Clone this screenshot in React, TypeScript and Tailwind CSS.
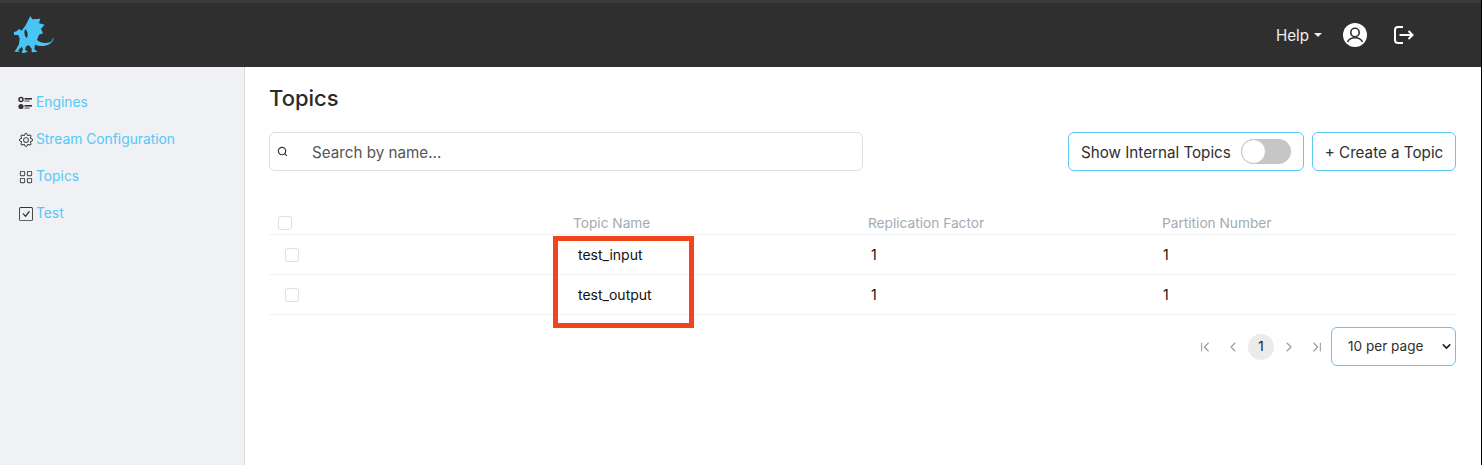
import { ChevronDown, ChevronFirst, ChevronLast, ChevronLeft, ChevronRight, Search } from 'lucide-react'
import { BsCheckSquare, BsGear, BsGrid } from 'react-icons/bs'
import type { ReactNode } from 'react'

function EnginesIcon() {
  return (
    <svg width="15" height="14" viewBox="0 0 15 14" className="text-[#333]">
      <circle cx="3" cy="3.5" r="2" fill="none" stroke="currentColor" strokeWidth="1.5" />
      <circle cx="3" cy="10.5" r="2.6" fill="currentColor" />
      <rect x="6.5" y="2" width="7.5" height="1.6" fill="currentColor" />
      <rect x="6.5" y="4.4" width="5" height="1.4" fill="#777" />
      <rect x="6.5" y="9" width="7.5" height="1.6" fill="currentColor" />
      <rect x="6.5" y="11.4" width="5" height="1.4" fill="#777" />
    </svg>
  )
}

function Logo() {
  return (
    <svg width="42" height="40" viewBox="40 45 126 120" className="text-[#48c5f5]">
      <path
        fill="currentColor"
        fillRule="evenodd"
        d="M92 48 L98 58 L122 56 L118 70 L135 74 L124 86 L130 100 L118 104 L112 120 C122 130 144 132 156 124 L161 112 C163 126 150 136 132 138 C122 139 114 137 106 134 L104 148 L114 155 L96 157 L96 146 L88 136 L80 138 L76 148 L84 156 L68 160 L66 154 L70 151 L67 140 L60 146 L55 152 L62 155 L44 155 L50 147 L58 132 L60 115 L56 105 L44 105 L42 97 L52 93 L58 87 L66 92 L72 84 L78 76 Z M76 88 C84 92 86 104 82 114 C76 112 72 100 76 88 Z"
      />
    </svg>
  )
}

function UserIcon() {
  return (
    <svg width="24" height="24" viewBox="0 0 24 24" className="ml-[21px]">
      <circle cx="12" cy="12" r="12" fill="#fff" />
      <circle cx="12" cy="9.5" r="4.2" fill="none" stroke="#2f2f2f" strokeWidth="1.6" />
      <path d="M4.6 19 C6 15.6 9 14.8 12 14.8 C15 14.8 18 15.6 19.4 19" fill="none" stroke="#2f2f2f" strokeWidth="1.6" />
    </svg>
  )
}

function LogoutIcon() {
  return (
    <svg width="20" height="18" viewBox="0 0 20 18" fill="none" stroke="#fff" strokeWidth="2" className="ml-[27px]">
      <path d="M9 1 H4 a3 3 0 0 0 -3 3 v10 a3 3 0 0 0 3 3 h5" />
      <path d="M5.5 9 H18.5 M14.5 5 l4 4 -4 4" />
    </svg>
  )
}

function NavItem({ icon, label }: { icon: ReactNode; label: string }) {
  return (
    <a className="flex h-[37px] items-center gap-[3px] text-[13.8px] text-[#55c8f7]">
      <span className="flex w-[15px] items-center justify-center text-[#333]">{icon}</span>
      {label}
    </a>
  )
}

function Check() {
  return <span className="block h-[14px] w-[14px] rounded-[3px] border border-[#dcdfe4] bg-white" />
}

const rows = ['test_input', 'test_output']

export default function App() {
  return (
    <div className="relative flex h-[465px] w-[1482px] flex-col overflow-hidden border-r border-black bg-white font-['Inter','Liberation_Sans',sans-serif]">
      <header className="flex h-[67px] shrink-0 items-center justify-between border-t-[3px] border-[#3a3a3a] bg-[#2f2f2f] pl-[13px] pr-[67px]">
        <Logo />
        <div className="flex items-center text-white">
          <button className="flex items-center gap-[5px] text-[15.2px] text-[#eeeeee]">
            <span className="pt-[2px]">Help</span>
            <span className="h-0 w-0 border-x-[4px] border-t-[4px] border-x-transparent border-t-[#eee]" />
          </button>
          <UserIcon />
          <LogoutIcon />
        </div>
      </header>

      <div className="flex flex-1">
        <aside className="w-[245px] shrink-0 border-r border-[#d8dadd] bg-[#eff1f4] pl-[18px] pt-[17px]">
          <NavItem icon={<EnginesIcon />} label="Engines" />
          <NavItem icon={<BsGear size={14} />} label="Stream Configuration" />
          <NavItem icon={<BsGrid size={14} />} label="Topics" />
          <NavItem icon={<BsCheckSquare size={14} />} label="Test" />
        </aside>

        <main className="flex-1 pl-6 pr-[25px] pt-[15px]">
          <h1 className="text-[22px] font-medium leading-8 text-[#2b2b2b]">Topics</h1>

          <div className="mt-[18px] flex items-center justify-between">
            <div className="flex h-[39px] w-[594px] items-center rounded-md border border-[#dcdfe4] bg-white pl-[7px]">
              <Search size={11} strokeWidth={2.5} className="text-[#333]" />
              <span className="ml-[24px] pt-[3px] text-[15.2px] text-[#555]">Search by name...</span>
            </div>
            <div className="flex gap-2">
              <div className="flex h-[39px] w-[236px] items-center justify-between rounded-md border border-[#5cc8f5] pl-[12px] pr-[12px] text-[15.2px] text-[#2f2f2f]">
                <span className="pt-[3px]">Show Internal Topics</span>
                <span className="flex h-[25px] w-[50px] items-center rounded-full bg-[#c6c6c6]">
                  <span className="h-[25px] w-[25px] rounded-full border border-[#c6c6c6] bg-white" />
                </span>
              </div>
              <button className="h-[39px] w-[144px] rounded-md border border-[#5cc8f5] pt-[3px] text-[15.2px] text-[#2f2f2f]">
                + Create a Topic
              </button>
            </div>
          </div>

          <div className="mt-[41px]">
            <div className="grid h-[23px] grid-cols-[304px_295px_294px_1fr] items-center border-b border-[#eef0f2] text-[13.7px] text-[#a3abb3]">
              <div className="pl-[9px]">
                <Check />
              </div>
              <div className="pt-[1px]">Topic Name</div>
              <div className="pt-[1px]">Replication Factor</div>
              <div className="pt-[1px]">Partition Number</div>
            </div>
            {rows.map((name) => (
              <div
                key={name}
                className="grid h-10 grid-cols-[309px_293px_292px_1fr] items-center border-b border-[#eef0f2] text-[14px] text-[#111]"
              >
                <div className="pl-4">
                  <Check />
                </div>
                <div>{name}</div>
                <div>1</div>
                <div>1</div>
              </div>
            ))}
          </div>

          <div className="mt-3 flex items-center justify-end text-[#9a9a9a]">
            <ChevronFirst size={16} strokeWidth={1.6} />
            <ChevronLeft size={16} strokeWidth={1.6} className="ml-[12px]" />
            <span className="ml-[7px] flex h-[26px] w-[26px] items-center justify-center rounded-full bg-[#ebebeb] text-[13.5px] text-[#222]">
              1
            </span>
            <ChevronRight size={16} strokeWidth={1.6} className="ml-[7px]" />
            <ChevronLast size={16} strokeWidth={1.6} className="ml-[12px]" />
            <div className="relative ml-[6px]">
              <select className="h-[39px] w-[125px] appearance-none rounded-md border border-[#5cc8f5] bg-white pl-4 text-[13.6px] text-[#2f2f2f]">
                <option>10 per page</option>
              </select>
              <ChevronDown size={13} strokeWidth={3} className="pointer-events-none absolute right-[3px] top-[13px] text-[#222]" />
            </div>
          </div>
        </main>
      </div>

      {/* annotation box from the screenshot */}
      <div className="absolute left-[553px] top-[236px] h-[92px] w-[141px] border-[5px] border-[#f0441c]" />
    </div>
  )
}
